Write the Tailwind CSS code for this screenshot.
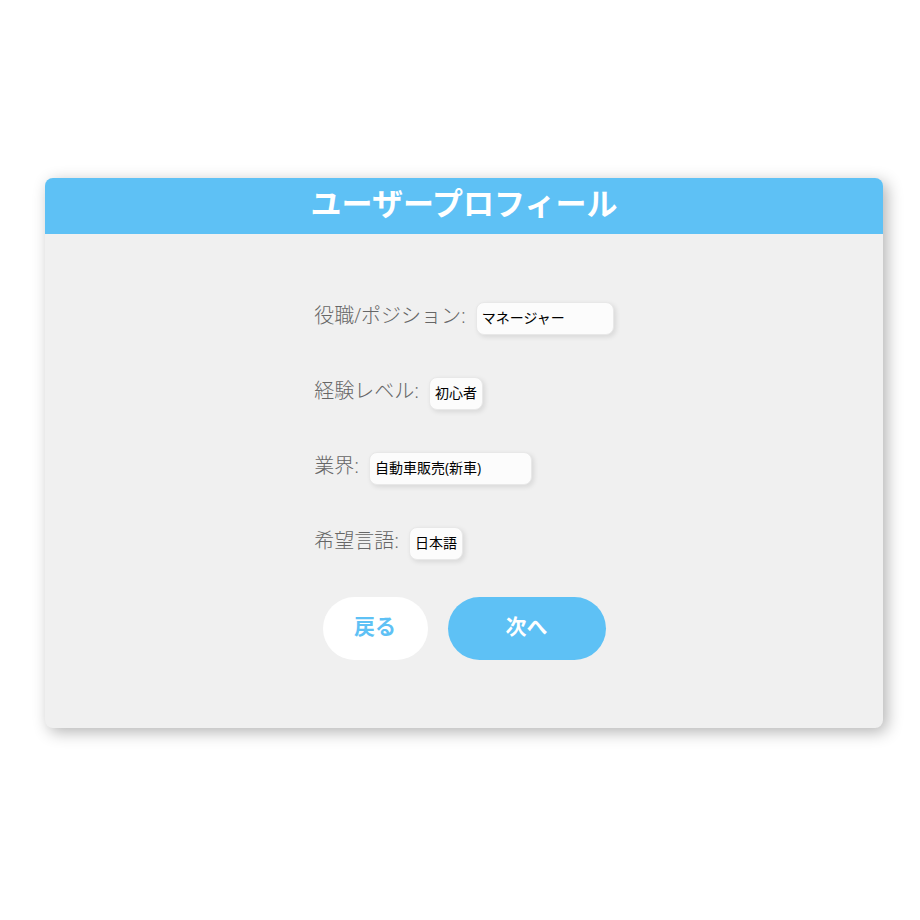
<!DOCTYPE html>
<html lang="ja">
<head>
<meta charset="UTF-8">
<meta name="viewport" content="width=device-width, initial-scale=1.0">
<title>ユーザープロフィール</title>
<script src="https://cdn.jsdelivr.net/npm/@tailwindcss/browser@4"></script>
</head>
<body class="flex min-h-screen items-center bg-white pr-[37px] pb-[14px] pl-[45px] font-['Open_Sans','Noto_Sans_CJK_JP',sans-serif]">
<main class="w-full rounded-lg bg-[#f0f0f0] shadow-[4px_4px_16px_rgba(0,0,0,0.3)]">
<header class="flex h-14 items-center justify-center rounded-t-lg bg-[#5ec1f5] pb-[6px]">
<h1 class="text-[31px] leading-none font-bold text-white">ユーザープロフィール</h1>
</header>
<form class="flex flex-col items-center px-4 pt-[68px] pb-[68px]">
<div class="flex flex-col gap-[42px]">
<div class="flex h-[33px] items-center gap-[10px]">
<label for="position" class="pb-[6px] text-xl leading-none font-light text-[#666]">役職/ポジション:</label>
<select id="position" class="h-[33px] w-[138px] appearance-none rounded-lg border border-[#e8e8e8] bg-[#fcfcfc] px-[5px] pb-[2px] text-sm leading-normal text-black shadow-[2px_2px_5px_rgba(0,0,0,0.1)]">
<option>マネージャー</option>
</select>
</div>
<div class="flex h-[33px] items-center gap-[10px]">
<label for="level" class="pb-[6px] text-xl leading-none font-light text-[#666]">経験レベル:</label>
<select id="level" class="h-[33px] w-[54px] appearance-none rounded-lg border border-[#e8e8e8] bg-[#fcfcfc] px-[5px] pb-[2px] text-sm leading-normal text-black shadow-[2px_2px_5px_rgba(0,0,0,0.1)]">
<option>初心者</option>
</select>
</div>
<div class="flex h-[33px] items-center gap-[10px]">
<label for="industry" class="pb-[6px] text-xl leading-none font-light text-[#666]">業界:</label>
<select id="industry" class="h-[33px] w-[163px] appearance-none rounded-lg border border-[#e8e8e8] bg-[#fcfcfc] px-[5px] pb-[2px] text-sm leading-normal text-black shadow-[2px_2px_5px_rgba(0,0,0,0.1)]">
<option>自動車販売(新車)</option>
</select>
</div>
<div class="flex h-[33px] items-center gap-[10px]">
<label for="language" class="pb-[6px] text-xl leading-none font-light text-[#666]">希望言語:</label>
<select id="language" class="h-[33px] w-[54px] appearance-none rounded-lg border border-[#e8e8e8] bg-[#fcfcfc] px-[5px] pb-[2px] text-sm leading-normal text-black shadow-[2px_2px_5px_rgba(0,0,0,0.1)]">
<option>日本語</option>
</select>
</div>
</div>
<div class="mt-[37px] flex gap-5">
<button type="button" class="h-[63px] w-[105px] rounded-full bg-white pb-1 text-[21px] leading-none font-bold text-[#5ec1f5]">戻る</button>
<button type="submit" class="h-[63px] w-[158px] rounded-full bg-[#5ec1f5] pb-1 text-[21px] leading-none font-bold text-white">次へ</button>
</div>
</form>
</main>
</body>
</html>
